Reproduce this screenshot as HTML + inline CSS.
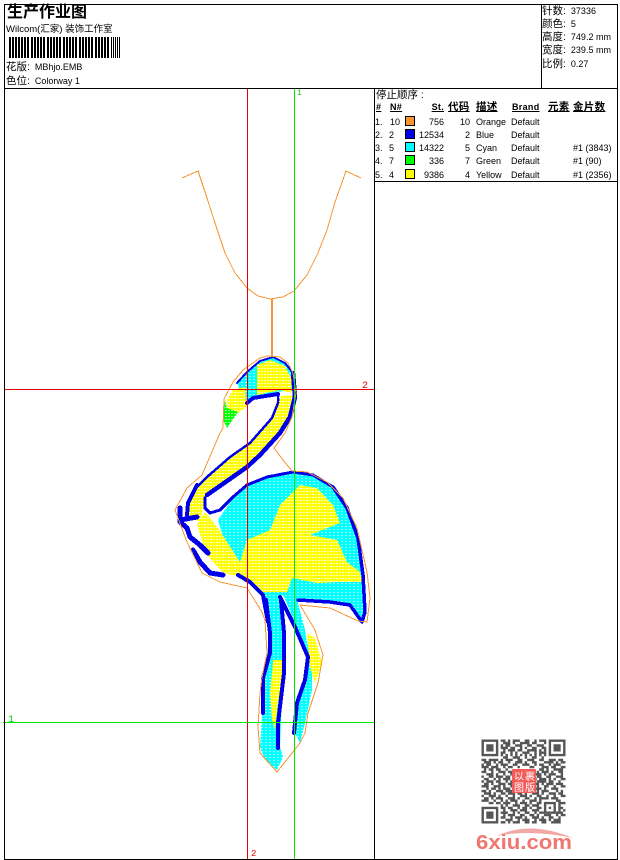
<!DOCTYPE html>
<html><head><meta charset="utf-8"><title>生产作业图</title>
<style>
html,body{margin:0;padding:0;background:#fff}
#p{position:relative;width:620px;height:860px;overflow:hidden;background:#fff;font:9px/12px "Liberation Sans","Noto Sans CJK SC",sans-serif;color:#000}
#p svg{position:absolute;left:0;top:0}
.t{position:absolute;white-space:nowrap}
.r{text-align:right}
.h{font-weight:bold;text-decoration:underline;letter-spacing:.3px;color:#000}
.c{font-size:10.5px}
.s{position:absolute;left:405px;width:8px;height:8px;border:1px solid #000}
</style></head><body><div id="p">
<svg width="620" height="860" viewBox="0 0 620 860">
<defs>
<pattern id="cy" width="4" height="3" patternUnits="userSpaceOnUse"><rect width="4" height="3" fill="#0ff"/><rect x="1" y="1" width="2" height="1" fill="#fff" opacity=".6"/></pattern>
<pattern id="ye" width="3" height="3" patternUnits="userSpaceOnUse"><rect width="3" height="3" fill="#ff0"/><rect x="0" y="2" width="2" height="1" fill="#fff" opacity=".8"/></pattern>
<pattern id="gr" width="3" height="3" patternUnits="userSpaceOnUse"><rect width="3" height="3" fill="#0f0"/><rect y="2" width="2" height="1" fill="#fff" opacity=".6"/></pattern>
</defs>
<!-- body and legs fill -->
<polygon fill="url(#cy)" points="218,520 233,498 247,485 267,477 293,472 313,475 333,487 347,508 358,538 363,575 365,612 362,620 350,605 330,602 298,600 290,597 262,592 245,575 228,555"/>
<polygon fill="url(#cy)" points="262,588 280,592 285,633 283,670 280,747 283,757 277,770 265,760 260,747 262,717 263,680 267,657 269,633"/>
<polygon fill="url(#cy)" points="282,592 295,592 305,630 312,670 312,690 305,723 300,743 295,733 297,707 307,677 308,657 295,623"/>
<polygon fill="url(#ye)" points="197,525 205,512 218,528 240,562 247,540 270,530 280,505 300,485 317,488 333,505 340,523 310,535 337,540 347,562 360,572 362,582 337,582 317,583 292,578 287,592 263,592 247,578 223,573 207,555"/>
<polygon fill="url(#ye)" points="273,660 282,660 283,673 278,703 275,730 272,720 270,693 272,673"/>
<polygon fill="url(#ye)" points="307,633 315,638 322,663 315,683 310,667"/>
<!-- neck and head -->
<polygon fill="url(#ye)" points="185,515 188,503 195,489 230,457 250,443 272,418 278,403 281,396 294,395 288,418 280,433 260,455 247,467 213,488 205,498 200,522"/>
<polygon fill="url(#cy)" points="237,383 247,372 260,361 273,357 285,363 293,373 294,390 278,392 253,398 247,403 242,395"/>
<polygon fill="url(#ye)" points="257,365 270,360 285,366 292,380 291,393 280,390 257,395"/>
<polygon fill="url(#ye)" points="233,390 245,387 246,407 240,412 228,415 227,400"/>
<polygon fill="url(#gr)" points="225,400 227,408 238,412 227,428 223,420"/>
<g shape-rendering="crispEdges" fill="none">
<g stroke="#0000e8" stroke-linejoin="round" stroke-linecap="round">
<path stroke-width="3" d="M205 498L205 508 210 513 220 510 233 497 247 485 267 477 293 472 313 475 333 487"/>
<path stroke-width="3.500" d="M333 487L347 508 358 538 363 575 365 612 362 622 350 605 330 602 298 600"/>
<path stroke-width="4.500" d="M207 495L247 467 260 455 280 433 290 417 295 397 293 373"/>
<path stroke-width="2" d="M293 373L285 363 273 357 260 361 247 372 237 383"/>
<path stroke-width="4" d="M247 403L253 398 278 394"/>
<path stroke-width="2.500" stroke-dasharray="3 1" d="M278 394L278 403 272 418 250 443 230 457 207 477 195 489"/>
<path stroke-width="4" d="M197 485L188 503 187 515"/>
<path stroke-width="5" d="M180 508L180 522 187 528 190 537 200 545 208 553M180 520L197 517M193 550L200 562 210 573 223 575"/>
<path stroke-width="4" d="M238 575L250 582 263 595 268 622"/>
<path stroke-width="4" d="M266 600L270 633 270 653 263 678 263 713M281 600L284 633 284 673 278 723 278 748"/>
<path stroke-width="4" d="M280 597L295 627 308 657 305 680 297 703 294 733"/>
</g>
<g stroke="#f79433" stroke-width="1">
<path d="M182 178L198 171 207 198 215 223 225 253 235 273 247 288 258 296 270 299 283 297 294 291 307 275 318 253 327 230 335 202 346 171 361 178"/>
<path stroke-width="2" d="M272 299V357"/>
<path d="M175 510L187 488 202 475 220 433 223 428 224 399 233 382 243 370 260 358 267 356 280 357 288 363 293 373 296 393 292 417 285 433 274 448 283 460 292 471 307 472 327 482 343 498 357 528 367 572 370 598 367 622 358 621 330 608 300 605 315 630 323 655 318 683 308 713 305 733 300 743 277 772 260 753 258 727 260 693 262 677 267 653 265 620 262 612 247 588 220 582 202 573 187 542Z"/>
</g>
<path stroke="#e80000" d="M247.500 89V859M4 389.500H374"/>
<path stroke="#00e800" d="M294.500 89V859M3 722.500H374"/>
<path stroke="#000" d="M4.500 4.500H617.500V859.500H4.500ZM4 88.500H617M374.500 88V860M541.500 4V88M374 181.500H617"/>
<path stroke="#000" stroke-width="2" d="M10 37V58M13 37V58M16 37V58M19 37V58M22 37V58M25 37V58M28 37V58M32 37V58M35 37V58M38 37V58M41 37V58M44 37V58M48 37V58M51 37V58M54 37V58M57 37V58M60 37V58M64 37V58M67 37V58M70 37V58M73 37V58M76 37V58M80 37V58M83 37V58M86 37V58M89 37V58M92 37V58M96 37V58M99 37V58M102 37V58M105 37V58M108 37V58"/>
<path stroke="#000" stroke-width="1" d="M111.500 37V58M113.500 37V58M115.500 37V58M117.500 37V58M119.500 37V58"/>
</g>
<!-- QR -->
<g transform="translate(481.500 739.500) scale(2.4)" fill="none" stroke="#444" stroke-width="1" opacity=".9">
<path d="M.5 .5h6v6h-6zM28.500 .5h6v6h-6zM.5 28.500h6v6h-6z"/>
<path stroke-width="3" d="M2 3.500h3M30 3.500h3M2 31.500h3"/>
<path d="M26.500 26.500h4v4h-4z"/><path d="M28 28.500h1"/>
<path d="M8 .5h2M11 .5h1M13 .5h3M18 .5h2M22 .5h1M24 .5h3
M9 1.500h3M13 1.500h1M16 1.500h4M21 1.500h2M26 1.500h1
M8 2.500h1M10 2.500h2M14 2.500h3M19 2.500h2M23 2.500h3
M8 3.500h3M12 3.500h2M16 3.500h1M18 3.500h1M21 3.500h2M25 3.500h2
M9 4.500h1M11 4.500h3M15 4.500h2M19 4.500h4M24 4.500h1M26 4.500h1
M8 5.500h2M12 5.500h1M14 5.500h1M17 5.500h3M22 5.500h1M24 5.500h3
M8 6.500h1M10 6.500h1M12 6.500h1M14 6.500h1M16 6.500h1M18 6.500h1M20 6.500h1M22 6.500h1M24 6.500h1M26 6.500h1
M9 7.500h2M13 7.500h3M18 7.500h1M21 7.500h2M25 7.500h1
M0 8.500h2M3 8.500h4M8 8.500h1M10 8.500h3M15 8.500h2M19 8.500h3M24 8.500h2M28 8.500h3M32 8.500h2
M1 9.500h3M5 9.500h1M7 9.500h2M11 9.500h1M14 9.500h3M18 9.500h1M21 9.500h2M26 9.500h4M31 9.500h1M33 9.500h2
M0 10.500h1M2 10.500h2M6 10.500h1M8 10.500h3M13 10.500h2M17 10.500h3M22 10.500h1M24 10.500h2M28 10.500h1M30 10.500h3
M0 11.500h3M4 11.500h3M9 11.500h1M11 11.500h2M15 11.500h1M20 11.500h2M25 11.500h3M29 11.500h2M33 11.500h2
M1 12.500h1M3 12.500h2M6 12.500h2M10 12.500h1M24 12.500h2M27 12.500h1M30 12.500h4
M0 13.500h2M4 13.500h1M7 13.500h3M11 13.500h2M23 13.500h1M25 13.500h3M29 13.500h1M32 13.500h2
M2 14.500h3M6 14.500h1M9 14.500h1M12 14.500h1M22 14.500h3M26 14.500h1M28 14.500h3M33 14.500h1
M0 15.500h1M3 15.500h2M6 15.500h3M10 15.500h2M23 15.500h2M27 15.500h2M31 15.500h3
M1 16.500h2M5 16.500h1M7 16.500h1M9 16.500h3M22 16.500h1M24 16.500h3M28 16.500h1M30 16.500h1M33 16.500h2
M0 17.500h1M2 17.500h3M6 17.500h2M10 17.500h1M12 17.500h1M23 17.500h4M28 17.500h2M32 17.500h1
M1 18.500h2M4 18.500h1M7 18.500h3M11 18.500h2M22 18.500h2M25 18.500h1M27 18.500h3M31 18.500h3
M0 19.500h3M5 19.500h3M9 19.500h1M12 19.500h1M23 19.500h1M26 19.500h2M30 19.500h1M33 19.500h2
M2 20.500h1M4 20.500h2M7 20.500h1M9 20.500h3M22 20.500h3M26 20.500h1M29 20.500h3
M0 21.500h2M3 21.500h1M6 21.500h3M10 21.500h3M23 21.500h1M25 21.500h3M31 21.500h1M33 21.500h1
M1 22.500h3M5 22.500h1M8 22.500h2M11 22.500h3M15 22.500h2M18 22.500h1M21 22.500h3M25 22.500h1M28 22.500h3M32 22.500h2
M0 23.500h1M3 23.500h3M7 23.500h1M10 23.500h1M13 23.500h1M16 23.500h3M20 23.500h1M23 23.500h2M27 23.500h1M30 23.500h1M33 23.500h2
M1 24.500h2M4 24.500h1M6 24.500h3M11 24.500h3M15 24.500h1M18 24.500h2M22 24.500h1M24 24.500h4M29 24.500h3
M0 25.500h3M5 25.500h1M8 25.500h1M10 25.500h1M12 25.500h3M17 25.500h1M20 25.500h3M24 25.500h1M31 25.500h2
M3 26.500h2M6 26.500h2M9 26.500h3M14 26.500h1M16 26.500h3M20 26.500h1M23 26.500h2M32 26.500h3
M8 27.500h1M10 27.500h1M13 27.500h3M18 27.500h2M21 27.500h3M32 27.500h1
M8 28.500h2M11 28.500h2M15 28.500h1M17 28.500h2M20 28.500h1M23 28.500h2M32 28.500h2
M9 29.500h1M12 29.500h3M16 29.500h3M21 29.500h3M32 29.500h1M34 29.500h1
M8 30.500h3M13 30.500h1M15 30.500h1M18 30.500h2M22 30.500h1M24 30.500h2M31 30.500h3
M9 31.500h1M11 31.500h3M16 31.500h2M20 31.500h2M23 31.500h1M26 31.500h3M31 31.500h1M33 31.500h2
M8 32.500h2M12 32.500h1M14 32.500h3M18 32.500h1M21 32.500h3M25 32.500h1M28 32.500h2M32 32.500h1
M10 33.500h3M15 33.500h1M17 33.500h3M22 33.500h1M24 33.500h3M28 33.500h1M30 33.500h3
M8 34.500h2M11 34.500h1M13 34.500h3M18 34.500h2M21 34.500h2M25 34.500h2M29 34.500h4"/>
</g>
<rect x="512" y="769" width="24" height="24" fill="#f45a58" rx="1"/>
<text x="514" y="780" font-size="10" fill="#fff" font-family="'Noto Sans CJK SC',sans-serif">以</text>
<text x="525" y="780" font-size="10" fill="#fff" font-family="'Noto Sans CJK SC',sans-serif">裹</text>
<text x="514" y="791" font-size="10" fill="#fff" font-family="'Noto Sans CJK SC',sans-serif">图</text>
<text x="525" y="791" font-size="10" fill="#fff" font-family="'Noto Sans CJK SC',sans-serif">版</text>
<!-- watermark -->
<path d="M497 836Q530 820 573 838Q530 829 497 836Z" fill="#f1a9a5"/>
<text x="476" y="849" font-size="20" font-weight="bold" fill="#ef7770" font-family="'Liberation Sans',sans-serif" textLength="96" lengthAdjust="spacingAndGlyphs">6xiu.com</text>
<text x="297" y="95" font-size="8" fill="#00d000" font-family="'Liberation Mono',monospace">1</text>
<text x="362" y="388" font-size="10" fill="#e80000" font-family="'Liberation Mono',monospace">2</text>
<text x="8" y="722" font-size="10" fill="#00d000" font-family="'Liberation Mono',monospace">1</text>
<text x="251" y="856" font-size="9" fill="#e80000" font-family="'Liberation Mono',monospace">2</text>
</svg>
<span class="t" style="left:7px;top:3px;font-size:16px;line-height:20px;font-weight:bold;color:#000">生产作业图</span>
<span class="t" style="left:6px;top:24px;font-size:9.500px">Wilcom(汇家) 装饰工作室</span>
<span class="t" style="left:6px;top:61px"><span class="c">花版:</span> &nbsp;MBhjo.EMB</span>
<span class="t" style="left:6px;top:75px"><span class="c">色位:</span> &nbsp;Colorway 1</span>

<span class="t" style="left:542px;top:5px"><span class="c">针数:</span>&nbsp; 37336</span>
<span class="t" style="left:542px;top:18px"><span class="c">颜色:</span>&nbsp; 5</span>
<span class="t" style="left:542px;top:31px"><span class="c">高度:</span>&nbsp; 749.2 mm</span>
<span class="t" style="left:542px;top:44px"><span class="c">宽度:</span>&nbsp; 239.5 mm</span>
<span class="t" style="left:542px;top:58px"><span class="c">比例:</span>&nbsp; 0.27</span>

<span class="t c" style="left:376px;top:89px">停止顺序 :</span>
<span class="t h" style="left:376px;top:101px">#</span>
<span class="t h" style="left:390px;top:101px">N#</span>
<span class="t h r" style="left:424px;width:20px;top:101px">St.</span>
<span class="t h c" style="left:448px;top:101px">代码</span>
<span class="t h c" style="left:476px;top:101px">描述</span>
<span class="t h" style="left:512px;top:101px">Brand</span>
<span class="t h c" style="left:548px;top:101px">元素</span>
<span class="t h c" style="left:573px;top:101px">金片数</span>

<span class="t" style="left:375px;top:116px">1.</span><span class="t" style="left:390px;top:116px">10</span><i class="s" style="top:116px;background:#f79433"></i><span class="t r" style="left:414px;width:30px;top:116px">756</span><span class="t r" style="left:450px;width:20px;top:116px">10</span><span class="t" style="left:476px;top:116px">Orange</span><span class="t" style="left:511px;top:116px">Default</span>
<span class="t" style="left:375px;top:129px">2.</span><span class="t" style="left:389px;top:129px">2</span><i class="s" style="top:129px;background:#0000e8"></i><span class="t r" style="left:414px;width:30px;top:129px">12534</span><span class="t r" style="left:450px;width:20px;top:129px">2</span><span class="t" style="left:476px;top:129px">Blue</span><span class="t" style="left:511px;top:129px">Default</span>
<span class="t" style="left:375px;top:142px">3.</span><span class="t" style="left:389px;top:142px">5</span><i class="s" style="top:142px;background:#0ff"></i><span class="t r" style="left:414px;width:30px;top:142px">14322</span><span class="t r" style="left:450px;width:20px;top:142px">5</span><span class="t" style="left:476px;top:142px">Cyan</span><span class="t" style="left:511px;top:142px">Default</span><span class="t" style="left:573px;top:142px">#1 (3843)</span>
<span class="t" style="left:375px;top:155px">4.</span><span class="t" style="left:389px;top:155px">7</span><i class="s" style="top:155px;background:#0f0"></i><span class="t r" style="left:414px;width:30px;top:155px">336</span><span class="t r" style="left:450px;width:20px;top:155px">7</span><span class="t" style="left:476px;top:155px">Green</span><span class="t" style="left:511px;top:155px">Default</span><span class="t" style="left:573px;top:155px">#1 (90)</span>
<span class="t" style="left:375px;top:169px">5.</span><span class="t" style="left:389px;top:169px">4</span><i class="s" style="top:169px;background:#ff0"></i><span class="t r" style="left:414px;width:30px;top:169px">9386</span><span class="t r" style="left:450px;width:20px;top:169px">4</span><span class="t" style="left:476px;top:169px">Yellow</span><span class="t" style="left:511px;top:169px">Default</span><span class="t" style="left:573px;top:169px">#1 (2356)</span>
</div></body></html>
